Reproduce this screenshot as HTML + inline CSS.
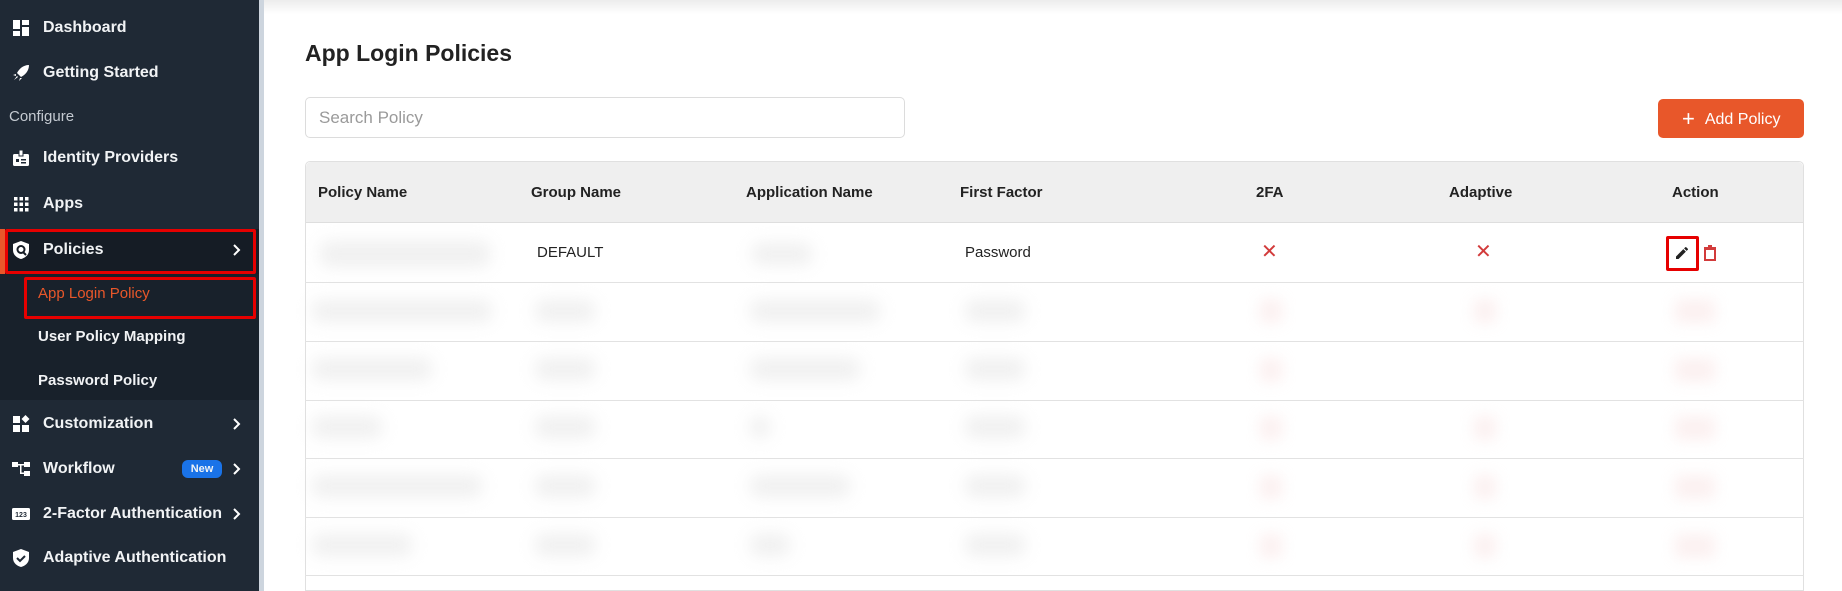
<!DOCTYPE html>
<html><head><meta charset="utf-8"><style>
*{box-sizing:border-box;margin:0;padding:0}
body{width:1842px;height:591px;overflow:hidden;background:#fff;font-family:"Liberation Sans",sans-serif;position:relative}
.sb{position:absolute;left:0;top:0;width:259px;height:591px;background:#1f2935}
.strip{position:absolute;left:259px;top:0;width:5px;height:591px;background:#cdd5de}
.it{position:absolute;left:0;width:259px;color:#f1f3f5;font-size:16px;font-weight:bold;line-height:20px}
.it .t{position:absolute;left:43px;top:0;white-space:nowrap}
.it .ic{position:absolute;left:12px;top:1px;width:18px;height:18px}
.chev{position:absolute;left:232px;top:4px;width:10px;height:12px}
.sub{position:absolute;left:38px;color:#f1f3f5;font-size:15px;font-weight:bold;white-space:nowrap}
.shadow{position:absolute;left:264px;right:0;top:0;height:14px;background:linear-gradient(#ececec,#fff)}
.hdr{position:absolute;font-size:15px;font-weight:bold;color:#222;top:184px}
.cell{position:absolute;font-size:15px;color:#222;top:244px}
.x{position:absolute;top:242px;color:#d23b3b;font-size:20px;line-height:20px}
.bl{position:absolute;height:22px;background:#dedede;filter:blur(8px);border-radius:8px;opacity:.45}
.rd{position:absolute;width:22px;height:24px;background:#f6d6d6;filter:blur(7px);opacity:.35}
.rl{position:absolute;left:305px;width:1499px;height:1px;background:#e2e2e2}
</style></head><body>
<div class="sb">
  <div style="position:absolute;left:0;top:229px;width:259px;height:45px;background:#151c25"></div>
  <div style="position:absolute;left:0;top:229px;width:5px;height:45px;background:#e8572a"></div>
  <div style="position:absolute;left:0;top:274px;width:259px;height:126px;background:#18212b"></div>
  <div style="position:absolute;left:5px;top:229px;width:251px;height:45px;border:3px solid #e60000;border-radius:2px"></div>
  <div style="position:absolute;left:24px;top:277px;width:232px;height:42px;border:3px solid #e60000;border-radius:2px"></div>

  <div class="it" style="top:18px"><svg class="ic" viewBox="0 0 18 18"><rect x="1" y="1" width="7" height="9" fill="#fff"/><rect x="10" y="1" width="7" height="5" fill="#fff"/><rect x="1" y="12" width="7" height="5" fill="#fff"/><rect x="10" y="8" width="7" height="9" fill="#fff"/></svg><span class="t">Dashboard</span></div>
  <div class="it" style="top:63px"><svg class="ic" viewBox="0 0 18 18"><path d="M17 1C11 1 7 5 5 9l4 4c4-2 8-6 8-12zM4 10l-3 1 3 1zM8 14l-1 3 3-3zM2 16l3-4 1 1z" fill="#fff"/></svg><span class="t">Getting Started</span></div>
  <div style="position:absolute;left:9px;top:108px;color:#c4cad1;font-size:15px">Configure</div>
  <div class="it" style="top:148px"><svg class="ic" viewBox="0 0 18 18"><rect x="1" y="5" width="16" height="12" rx="1.5" fill="#fff"/><rect x="7" y="1" width="4" height="6" fill="#fff" stroke="#1f2935"/><rect x="4" y="10" width="3" height="3" fill="#1f2935"/><rect x="9" y="10" width="5" height="1.5" fill="#1f2935"/><rect x="9" y="13" width="5" height="1.5" fill="#1f2935"/></svg><span class="t">Identity Providers</span></div>
  <div class="it" style="top:194px"><svg class="ic" viewBox="0 0 18 18" fill="#fff"><rect x="2" y="2" width="3.5" height="3.5"/><rect x="7.5" y="2" width="3.5" height="3.5"/><rect x="13" y="2" width="3.5" height="3.5"/><rect x="2" y="7.5" width="3.5" height="3.5"/><rect x="7.5" y="7.5" width="3.5" height="3.5"/><rect x="13" y="7.5" width="3.5" height="3.5"/><rect x="2" y="13" width="3.5" height="3.5"/><rect x="7.5" y="13" width="3.5" height="3.5"/><rect x="13" y="13" width="3.5" height="3.5"/></svg><span class="t">Apps</span></div>
  <div class="it" style="top:240px"><svg class="ic" viewBox="0 0 18 18"><path d="M9 0l8 3v6c0 5-4 8-8 9-4-1-8-4-8-9V3z" fill="#fff"/><circle cx="9" cy="8.5" r="3.5" fill="none" stroke="#151c25" stroke-width="2"/><path d="M11 11l3 3" stroke="#151c25" stroke-width="2"/></svg><span class="t">Policies</span><svg class="chev" viewBox="0 0 10 12"><path d="M2 1l5 5-5 5" stroke="#fff" stroke-width="2" fill="none"/></svg></div>
  <div class="sub" style="top:285px;color:#e8572a;font-weight:normal">App Login Policy</div>
  <div class="sub" style="top:328px">User Policy Mapping</div>
  <div class="sub" style="top:372px">Password Policy</div>
  <div class="it" style="top:414px"><svg class="ic" viewBox="0 0 18 18" fill="#fff"><rect x="1" y="1" width="7" height="7"/><rect x="1" y="10" width="7" height="7"/><rect x="10" y="10" width="7" height="7"/><path d="M13.5 0l4 4-4 4-4-4z"/></svg><span class="t">Customization</span><svg class="chev" viewBox="0 0 10 12"><path d="M2 1l5 5-5 5" stroke="#fff" stroke-width="2" fill="none"/></svg></div>
  <div class="it" style="top:459px"><svg class="ic" viewBox="0 0 18 18" fill="#fff"><rect x="0" y="2" width="6" height="5"/><rect x="12" y="2" width="6" height="5"/><rect x="12" y="11" width="6" height="5"/><rect x="6" y="4" width="6" height="1.5"/><rect x="8" y="4" width="1.5" height="10"/><rect x="8" y="12.5" width="4" height="1.5"/></svg><span class="t">Workflow</span><span style="position:absolute;left:182px;top:1px;width:40px;height:18px;background:#1a73e8;border-radius:6px;font-size:11px;text-align:center;line-height:18px">New</span><svg class="chev" viewBox="0 0 10 12"><path d="M2 1l5 5-5 5" stroke="#fff" stroke-width="2" fill="none"/></svg></div>
  <div class="it" style="top:504px"><svg class="ic" viewBox="0 0 18 18"><rect x="0" y="3" width="18" height="12" rx="1.5" fill="#fff"/><text x="9" y="12" font-size="7" text-anchor="middle" fill="#1f2935" font-family="Liberation Sans">123</text></svg><span class="t">2-Factor Authentication</span><svg class="chev" viewBox="0 0 10 12"><path d="M2 1l5 5-5 5" stroke="#fff" stroke-width="2" fill="none"/></svg></div>
  <div class="it" style="top:548px"><svg class="ic" viewBox="0 0 18 18"><path d="M9 0l8 3v6c0 5-4 8-8 9-4-1-8-4-8-9V3z" fill="#fff"/><path d="M5 9l3 3 5-5" stroke="#1f2935" stroke-width="2" fill="none"/></svg><span class="t">Adaptive Authentication</span></div>
</div>
<div class="strip"></div>
<div class="shadow"></div>

<div style="position:absolute;left:305px;top:40px;font-size:23px;font-weight:bold;color:#222">App Login Policies</div>
<div style="position:absolute;left:305px;top:97px;width:600px;height:41px;border:1px solid #dcdcdc;border-radius:5px;color:#9a9a9a;font-size:17px;padding:10px 13px">Search Policy</div>
<div style="position:absolute;left:1658px;top:99px;width:146px;height:39px;background:#e8572a;border-radius:5px;color:#fff;font-size:16px;line-height:39px;padding-left:24px"><span style="font-size:22px;vertical-align:-2px;margin-right:10px">+</span>Add Policy</div>

<div style="position:absolute;left:305px;top:161px;width:1499px;height:430px;border:1px solid #e0e0e0;border-radius:5px 5px 0 0"></div>
<div style="position:absolute;left:306px;top:162px;width:1497px;height:61px;background:#efefef;border-radius:5px 5px 0 0;border-bottom:1px solid #dedede"></div>
<div class="hdr" style="left:318px">Policy Name</div>
<div class="hdr" style="left:531px">Group Name</div>
<div class="hdr" style="left:746px">Application Name</div>
<div class="hdr" style="left:960px">First Factor</div>
<div class="hdr" style="left:1256px">2FA</div>
<div class="hdr" style="left:1449px">Adaptive</div>
<div class="hdr" style="left:1672px">Action</div>

<div class="bl" style="left:320px;top:241px;width:170px;height:26px"></div>
<div class="cell" style="left:537px">DEFAULT</div>
<div class="bl" style="left:752px;top:243px;width:60px;height:22px"></div>
<div class="cell" style="left:965px">Password</div>
<div class="x" style="left:1261px">✕</div>
<div class="x" style="left:1475px">✕</div>
<div style="position:absolute;left:1666px;top:236px;width:33px;height:35px;border:3px solid #e60000;border-radius:2px"></div>
<svg style="position:absolute;left:1674px;top:245px" width="16" height="16" viewBox="0 0 24 24"><path d="M3 17.25V21h3.75L17.81 9.94l-3.75-3.75zM20.71 7.04a1 1 0 000-1.41l-2.34-2.34a1 1 0 00-1.41 0l-1.83 1.83 3.75 3.75z" fill="#222"/></svg>
<svg style="position:absolute;left:1703px;top:245px" width="14" height="16" viewBox="0 0 14 16"><path d="M2 4h10v11H2z" fill="none" stroke="#d23b3b" stroke-width="2"/><path d="M1 3h12M5 1h4" stroke="#d23b3b" stroke-width="2"/></svg>

<div class="rl" style="top:282px"></div>
<div class="rl" style="top:341px"></div>
<div class="rl" style="top:400px"></div>
<div class="rl" style="top:458px"></div>
<div class="rl" style="top:517px"></div>
<div class="rl" style="top:575px"></div>

<div class="bl" style="left:312px;top:300px;width:180px"></div>
<div class="bl" style="left:535px;top:300px;width:60px"></div>
<div class="bl" style="left:750px;top:300px;width:130px"></div>
<div class="bl" style="left:965px;top:300px;width:60px"></div>
<div class="bl" style="left:312px;top:358px;width:120px"></div>
<div class="bl" style="left:535px;top:358px;width:60px"></div>
<div class="bl" style="left:750px;top:358px;width:110px"></div>
<div class="bl" style="left:965px;top:358px;width:60px"></div>
<div class="bl" style="left:312px;top:416px;width:70px"></div>
<div class="bl" style="left:535px;top:416px;width:60px"></div>
<div class="bl" style="left:750px;top:416px;width:20px"></div>
<div class="bl" style="left:965px;top:416px;width:60px"></div>
<div class="bl" style="left:312px;top:475px;width:170px"></div>
<div class="bl" style="left:535px;top:475px;width:60px"></div>
<div class="bl" style="left:750px;top:475px;width:100px"></div>
<div class="bl" style="left:965px;top:475px;width:60px"></div>
<div class="bl" style="left:312px;top:534px;width:100px"></div>
<div class="bl" style="left:535px;top:534px;width:60px"></div>
<div class="bl" style="left:750px;top:534px;width:40px"></div>
<div class="bl" style="left:965px;top:534px;width:60px"></div>

<div class="rd" style="left:1260px;top:299px"></div><div class="rd" style="left:1260px;top:358px"></div><div class="rd" style="left:1260px;top:416px"></div><div class="rd" style="left:1260px;top:475px"></div><div class="rd" style="left:1260px;top:534px"></div>
<div class="rd" style="left:1474px;top:299px"></div><div class="rd" style="left:1474px;top:416px"></div><div class="rd" style="left:1474px;top:475px"></div><div class="rd" style="left:1474px;top:534px"></div>
<div class="rd" style="left:1675px;top:299px;width:40px"></div><div class="rd" style="left:1675px;top:358px;width:40px"></div><div class="rd" style="left:1675px;top:416px;width:40px"></div><div class="rd" style="left:1675px;top:475px;width:40px"></div><div class="rd" style="left:1675px;top:534px;width:40px"></div>
</body></html>
